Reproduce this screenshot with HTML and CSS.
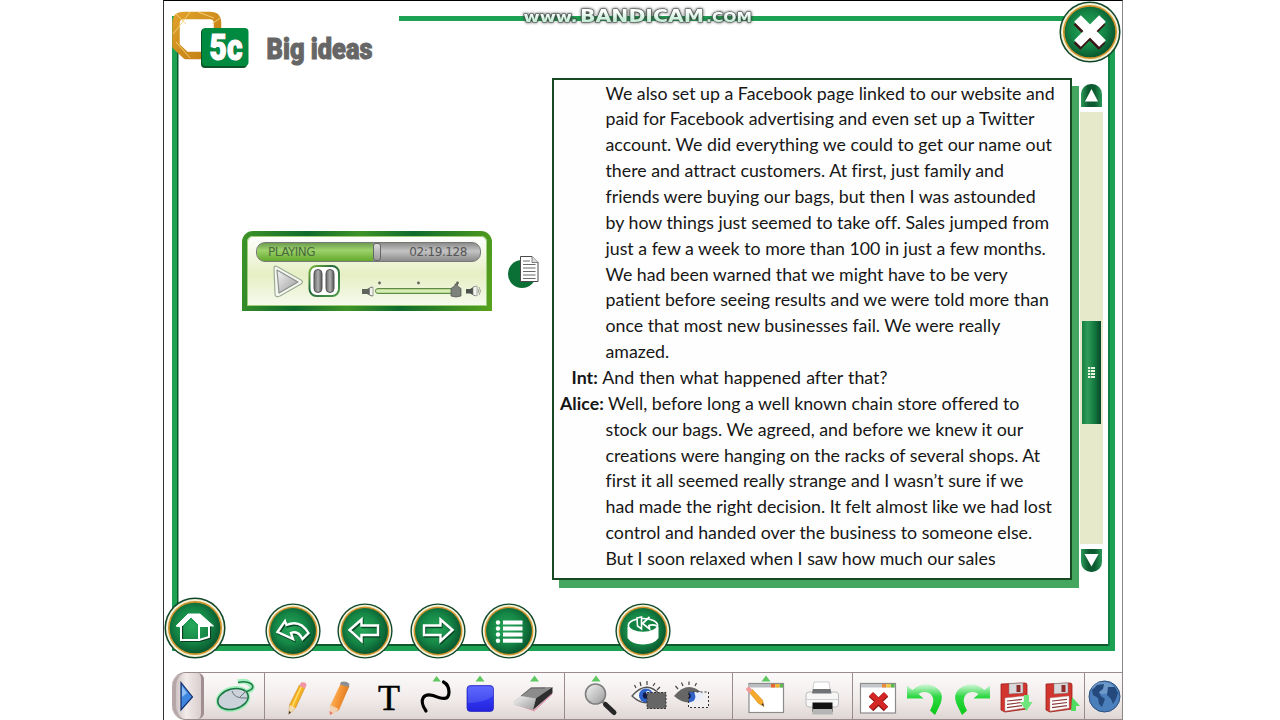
FILE: index.html
```html
<!DOCTYPE html>
<html lang="en">

<head>
    <meta charset="utf-8">
    <meta name="viewport" content="width=device-width, initial-scale=1">
    <title>5c Big ideas</title>
    <link rel="stylesheet" href="styles.css">
</head>

<body>

    <!-- shared gradients and symbols -->
    <svg class="defs" width="0" height="0">
        <defs>
            <radialGradient id="discFill" cx="45%" cy="45%" r="60%">
                <stop offset="0" stop-color="#27a85a"></stop>
                <stop offset="0.55" stop-color="#158746"></stop>
                <stop offset="1" stop-color="#07502b"></stop>
            </radialGradient>
            <linearGradient id="gold" x1="0" y1="0" x2="1" y2="1">
                <stop offset="0" stop-color="#dfa02a"></stop>
                <stop offset="1" stop-color="#c07c12"></stop>
            </linearGradient>
            <linearGradient id="grey" x1="0" y1="0" x2="1" y2="1">
                <stop offset="0" stop-color="#f4f4f4"></stop>
                <stop offset="1" stop-color="#9a9a9a"></stop>
            </linearGradient>
            <linearGradient id="dark" x1="0" y1="0" x2="1" y2="0">
                <stop offset="0" stop-color="#666"></stop>
                <stop offset="0.5" stop-color="#b0b0b0"></stop>
                <stop offset="1" stop-color="#555"></stop>
            </linearGradient>
            <linearGradient id="ring" x1="0" y1="0" x2="1" y2="1">
                <stop offset="0" stop-color="#7fb83c"></stop>
                <stop offset="0.4" stop-color="#23683a"></stop>
                <stop offset="1" stop-color="#4f9c4a"></stop>
            </linearGradient>
            <linearGradient id="blue" x1="0" y1="0" x2="0" y2="1">
                <stop offset="0" stop-color="#4a54ff"></stop>
                <stop offset="0.5" stop-color="#2f38f0"></stop>
                <stop offset="1" stop-color="#2424dc"></stop>
            </linearGradient>
            <linearGradient id="arrowGreen" x1="0" y1="0" x2="0" y2="1">
                <stop offset="0" stop-color="#d4f7da"></stop>
                <stop offset="0.4" stop-color="#2fd845"></stop>
                <stop offset="1" stop-color="#06c814"></stop>
            </linearGradient>
            <linearGradient id="orange" x1="0" y1="0" x2="1" y2="0.4">
                <stop offset="0" stop-color="#ffc47a"></stop>
                <stop offset="0.5" stop-color="#f79a3b"></stop>
                <stop offset="1" stop-color="#d9731a"></stop>
            </linearGradient>
            <linearGradient id="mint" x1="0" y1="0" x2="0" y2="1">
                <stop offset="0.3" stop-color="#ffffff"></stop>
                <stop offset="0.7" stop-color="#c9efd9"></stop>
            </linearGradient>
            <symbol id="disc" viewBox="0 0 56 56">
                <circle cx="28" cy="28" r="27.6" fill="#10472c"></circle>
                <circle cx="28" cy="28" r="26.2" fill="#f4f3d8"></circle>
                <circle cx="28" cy="28" r="24.4" fill="#d0922a"></circle>
                <circle cx="28" cy="28" r="22.9" fill="url(#discFill)"></circle>
            </symbol>
            <symbol id="floppy" viewBox="0 0 30 32">
                <path d="M2 2 L26 1 Q28 1 28 3 L28 27 L6 30 L2 28 Z" fill="#d2352d" stroke="#9c1f1b" stroke-width="0.8"></path>
                <path d="M10 1.6 L24 1 V11 L10 12 Z" fill="#d9d9dc" stroke="#777" stroke-width="0.5"></path>
                <rect x="17.5" y="3" width="4" height="7" fill="#8f2b2b"></rect>
                <path d="M6 16 L25 14 V26 L6 29 Z" fill="#fff" stroke="#b5a0a0" stroke-width="0.5"></path>
                <path d="M8 19 L23 17.4 M8 22.3 L23 20.5 M8 25.6 L23 23.6" stroke="#8c3a3a" stroke-width="1.2"></path>
            </symbol>
        </defs>
    </svg>

    <div class="stage">
        <div class="frame">
            <header>
                <svg class="badge" width="77" height="60" viewBox="172 10 77 60">
                    <path d="M184 15.500 H210 Q217.500 15.500 217.500 23 V48 Q217.500 55.500 210 55.500 H186 L176 46 V23 Q176 15.500 184 15.500 Z" fill="none" stroke="url(#gold)" stroke-width="7.500" stroke-linejoin="round"></path>
                    <path d="M176 14 L186 24 M173 34 L181 24 L190 12 M198 12 L214 18 M176 42 L190 58 M212 24 L220 18" fill="none" stroke="#f4d27a" stroke-width="0.900"></path>
                    <rect x="201" y="28.500" width="46" height="39.500" rx="4" fill="#0a5428"></rect>
                    <rect x="202" y="28" width="46.500" height="38" rx="4" fill="#008a40"></rect>
                    <text x="210" y="60" class="badge-text" textLength="33" lengthAdjust="spacingAndGlyphs" fill="#07522a" stroke="#07522a">5c</text>
                    <text x="209.500" y="59.500" class="badge-text" textLength="33" lengthAdjust="spacingAndGlyphs" fill="#fff" stroke="#fff">5c</text>
                </svg>
                <svg class="title" width="120" height="48" viewBox="262 26 120 48">
                    <text x="266.500" y="59.300" class="title-text" textLength="106" lengthAdjust="spacingAndGlyphs">Big ideas</text>
                </svg>
                <div class="rule"></div>
            </header>

            <main>
                <div class="player">
                    <div class="progress">
                        <div class="played">PLAYING</div>
                        <div class="knob"></div>
                        <div class="time">02:19.128</div>
                    </div>
                    <svg class="controls" width="240" height="43" viewBox="247 263 240 43">
                        <path d="M274 268 Q274 265.500 277 266.500 L301 280 Q304 282 301 284 L280 296 Q275 298 275 294 Z" fill="#f6f8ef" stroke="#9cab98" stroke-width="1.200"></path>
                        <path d="M277 270 L298 282 L279 293 Z" fill="url(#grey)" stroke="#8c918c" stroke-width="1.200" stroke-linejoin="round"></path>
                        <rect x="309.500" y="266" width="29.500" height="30" rx="7" fill="#fff" stroke="url(#ring)" stroke-width="2"></rect>
                        <rect x="314" y="269.500" width="8" height="23" rx="4" fill="url(#dark)" stroke="#555"></rect>
                        <rect x="326" y="269.500" width="8" height="23" rx="4" fill="url(#dark)" stroke="#555"></rect>
                        <g fill="#5f665c">
                            <circle cx="379.500" cy="283" r="1.400"></circle>
                            <circle cx="418.500" cy="283" r="1.400"></circle>
                            <circle cx="457.500" cy="283" r="1.400"></circle>
                        </g>
                        <rect x="375.500" y="288.500" width="82" height="5" rx="2.500" fill="#b8dc8c" stroke="#5f8a4c"></rect>
                        <path d="M376 291 H456" stroke="#f4fae8"></path>
                        <path d="M362 289 H367 L372 286.500 V296.500 L367 294 H362 Z" fill="#5d645c"></path>
                        <path d="M369.500 288 L373 287 V296 L369.500 295 Z" fill="#f5f5f0" stroke="#666" stroke-width="0.600"></path>
                        <path d="M451 296 V288.500 L455 285.500 V284 H457.500 V286 L461 288.500 V296 Q456 298 451 296 Z" fill="#7d837c" stroke="#4d524c" stroke-width="0.700"></path>
                        <path d="M466 289 H470 L475 286 V296 L470 293.500 H466 Z" fill="#4d524c"></path>
                        <path d="M473 287 L477 286 V296 L473 295 Z" fill="#f5f5f0" stroke="#777" stroke-width="0.600"></path>
                        <path d="M479 287 Q482 291 479 295 M478 289 Q479.500 291 478 293" fill="none" stroke="#9da39b"></path>
                    </svg>
                </div>

                <svg class="doc" width="31" height="35" viewBox="508 255 31 35">
                    <circle cx="522" cy="274" r="14" fill="#0b7036"></circle>
                    <path d="M520.500 256.500 H532 L538 262.500 V281.500 H520.500 Z" fill="#fff" stroke="#4a4a4a"></path>
                    <path d="M532 256.500 V262.500 H538" fill="#ddd" stroke="#666" stroke-width="0.800"></path>
                    <path d="M523 261 H530 M523 264.500 H535.500 M523 268 H535.500 M523 271.500 H535.500 M523 275 H535.500 M523 278.500 H535.500" stroke="#6a6a6a" stroke-width="1.100"></path>
                </svg>

                <div class="transcript">
                    <p>We also set up a Facebook page linked to our website and</p>
                    <p>paid for Facebook advertising and even set up a Twitter</p>
                    <p>account. We did everything we could to get our name out</p>
                    <p>there and attract customers. At first, just family and</p>
                    <p>friends were buying our bags, but then I was astounded</p>
                    <p>by how things just seemed to take off. Sales jumped from</p>
                    <p>just a few a week to more than 100 in just a few months.</p>
                    <p>We had been warned that we might have to be very</p>
                    <p>patient before seeing results and we were told more than</p>
                    <p>once that most new businesses fail. We were really</p>
                    <p>amazed.</p>
                    <p class="int"><b>Int:</b> And then what happened after that?</p>
                    <p class="alice"><b>Alice:</b> Well, before long a well known chain store offered to</p>
                    <p>stock our bags. We agreed, and before we knew it our</p>
                    <p>creations were hanging on the racks of several shops. At</p>
                    <p>first it all seemed really strange and I wasn’t sure if we</p>
                    <p>had made the right decision. It felt almost like we had lost</p>
                    <p>control and handed over the business to someone else.</p>
                    <p>But I soon relaxed when I saw how much our sales</p>
                </div>

                <div class="scrollbar">
                    <div class="arrow up"><svg width="21" height="23" viewBox="0 0 21 23"><path d="M10.500 5 L17 17.500 H4 Z" fill="#fff"></path></svg></div>
                    <div class="track">
                        <div class="thumb"><span></span><span></span><span></span><span></span></div>
                    </div>
                    <div class="arrow down"><svg width="21" height="23" viewBox="0 0 21 23"><path d="M3.500 5 H17.500 L10.500 17.500 Z" fill="#fff"></path></svg></div>
                </div>
            </main>
        </div>

        <nav>
            <svg class="home" width="62" height="62" viewBox="0 0 62 62">
                <use href="#disc" width="62" height="62"></use>
                <g fill="none" stroke="#0a3d20" stroke-width="2.200" transform="translate(1 1)">
                    <path d="M17 28 V43 H35 L45 40 V29"></path>
                </g>
                <path d="M12 29 L24 17 H36 L49.500 29 L37 28 V30 L27 20 L17 30 Z" fill="#fff" stroke="#fff" stroke-linejoin="round"></path>
                <path d="M17 28 V43 H35 V28 M35 43 L45 40 V29 H35" fill="none" stroke="#fff" stroke-width="2"></path>
            </svg>
            <svg class="back" width="56" height="56" viewBox="0 0 56 56">
                <use href="#disc" width="56" height="56"></use>
                <path class="shade" d="M12.500 29 L20 18 L21.500 22 Q35 16 43.500 30 L37.500 36 Q33 27 26 30 L28 36 Z"></path>
                <path class="line" d="M12.500 29 L20 18 L21.500 22 Q35 16 43.500 30 L37.500 36 Q33 27 26 30 L28 36 Z"></path>
            </svg>
            <svg class="prev" width="56" height="56" viewBox="0 0 56 56">
                <use href="#disc" width="56" height="56"></use>
                <path class="shade" d="M12.500 27 L24.500 16.500 V22.500 H41 V32 H24.500 V38 Z"></path>
                <path class="line" d="M12.500 27 L24.500 16.500 V22.500 H41 V32 H24.500 V38 Z"></path>
            </svg>
            <svg class="next" width="56" height="56" viewBox="0 0 56 56">
                <use href="#disc" width="56" height="56"></use>
                <path class="shade" d="M42.500 27 L30.500 16.500 V22.500 H14 V32 H30.500 V38 Z"></path>
                <path class="line" d="M42.500 27 L30.500 16.500 V22.500 H14 V32 H30.500 V38 Z"></path>
            </svg>
            <svg class="list" width="56" height="56" viewBox="0 0 56 56">
                <use href="#disc" width="56" height="56"></use>
                <g fill="#fff">
                    <circle cx="17" cy="19.500" r="2.200"></circle>
                    <circle cx="17" cy="25.500" r="2.200"></circle>
                    <circle cx="17" cy="31.500" r="2.200"></circle>
                    <circle cx="17" cy="37.700" r="2.200"></circle>
                    <rect x="22" y="17.500" width="19.500" height="4"></rect>
                    <rect x="22" y="23.500" width="19.500" height="4"></rect>
                    <rect x="22" y="29.500" width="19.500" height="4"></rect>
                    <rect x="22" y="35.700" width="19.500" height="4"></rect>
                </g>
            </svg>
            <svg class="drum" width="56" height="56" viewBox="0 0 56 56">
                <use href="#disc" width="56" height="56"></use>
                <path d="M12.500 24 V35 Q17 41.500 28 41.500 Q39 41.500 43.500 35 V24 Z" fill="#fff"></path>
                <ellipse cx="28" cy="22.500" rx="14.600" ry="7" fill="#128343" stroke="#fff" stroke-width="1.600"></ellipse>
                <path d="M22 15 L26.500 14 V26 L22.500 23 Z" fill="#128343" stroke="#fff" stroke-width="1.600"></path>
                <path d="M34.500 14 L27.500 20.500 L34.500 26 L34 22.500 Q38 21 42 23" fill="none" stroke="#fff" stroke-width="1.800"></path>
            </svg>
        </nav>

        <div class="toolbar">
            <div class="handle">
                <svg width="32" height="46" viewBox="172 673 32 46">
                    <path d="M181 682.500 L192.500 697 L181 710 Z" fill="#3f86e0" stroke="#12306e" stroke-width="1.200"></path>
                    <path d="M182 686 L187 693 L182 697 Z" fill="#8fbdf5"></path>
                </svg>
            </div>
            <div class="group">
                <svg width="60" height="46" viewBox="204 673 60 46">
                    <g fill="none" stroke="#7df0a4" stroke-width="5" opacity="0.700">
                        <path d="M238 682 Q246 680 250 684 Q256 689 246 692"></path>
                        <ellipse cx="233" cy="699" rx="15" ry="10" transform="rotate(-15 233 699)"></ellipse>
                    </g>
                    <path d="M238 682.500 Q246 680.500 251.500 684 Q256 689 245 692" fill="none" stroke="#237a4a" stroke-width="1.500"></path>
                    <ellipse cx="233" cy="699" rx="15.500" ry="10" transform="rotate(-15 233 699)" fill="#ccd2da" stroke="#1c7444" stroke-width="1.600"></ellipse>
                    <path d="M232 691 Q234 699 247 698 M240 697 L246 691" fill="none" stroke="#667684"></path>
                </svg>
            </div>
            <div class="group">
                <svg width="53" height="46" viewBox="265 673 53 46">
                    <path d="M299.500 685 L305 687.500 L295.500 708 L289 714 L289.500 705 Z" fill="#f5b222" stroke="#c98518" stroke-width="0.600"></path>
                    <path d="M301.500 686 L292 707" stroke="#ffdf70" stroke-width="1.500"></path>
                    <path d="M301 682.500 Q306 681.500 306.500 685 L305 688.500 L299.500 686 Z" fill="#ee96a4"></path>
                    <path d="M289.500 705 L295.500 708 L289 714 Z" fill="#f2dcb4"></path>
                    <path d="M289.200 711 L291 712.200 L288.500 714.500 Z" fill="#333"></path>
                </svg>
                <svg width="42" height="46" viewBox="318 673 42 46">
                    <path d="M341 683 L349.500 686 L339 710 L331 714.500 L330 706 Z" fill="url(#orange)"></path>
                    <path d="M341 682 Q346 680.500 349.500 684 L348.500 687 L340 684.500 Z" fill="#8c8f96"></path>
                    <path d="M330.500 705 L338.500 709 L333 714.500 L329.500 714 Z" fill="#f1d3b4"></path>
                    <path d="M329.500 711 L333 713 L330 715 Z" fill="#e77b6a"></path>
                </svg>
                <svg width="50" height="46" viewBox="360 673 50 46">
                    <text x="389" y="709.800" text-anchor="middle" class="letter">T</text>
                </svg>
                <svg width="48" height="46" viewBox="410 673 48 46">
                    <path d="M432.500 681.500 L436.500 676 L441 681.500 Z" fill="#5fc860"></path>
                    <path d="M426 711 C418 699 424 693 433 695.500 C442 699 449 701 449 692 Q449 685 443.500 682" fill="none" stroke="#000" stroke-width="3.200" stroke-linecap="round"></path>
                </svg>
                <svg width="48" height="46" viewBox="458 673 48 46">
                    <path d="M475.500 681.500 L480 675.500 L484.500 681.500 Z" fill="#5fc860"></path>
                    <rect x="467" y="685.500" width="26.500" height="26" rx="3.500" fill="url(#blue)" stroke="#2020b8" stroke-width="0.700"></rect>
                    <path d="M468 703 Q484 703 493 696 V689 Q493 686.500 490 686.500 H471 Q468 686.500 468 689 Z" fill="#fff" opacity="0.130"></path>
                </svg>
                <svg width="58" height="46" viewBox="506 673 58 46">
                    <path d="M530 681.500 L534.500 675.500 L539 681.500 Z" fill="#5fc860"></path>
                    <path d="M514 703.500 L534 710.800 L552 694" fill="none" stroke="#e79ab4" stroke-width="1.200"></path>
                    <path d="M514 702 L531 687.500 L552 687 L537 699 Z" fill="#8c8c8c"></path>
                    <path d="M514 702 L521 696 L536 698.500 L533 710 L514 705 Z" fill="url(#grey)"></path>
                    <path d="M536 698.500 L552.500 687 V693 L533 710 Z" fill="#2e2e2e"></path>
                    <path d="M521 696 L531 688 L545 688" fill="none" stroke="#555" stroke-width="0.800"></path>
                </svg>
            </div>
            <div class="group gap">
                <svg width="58" height="46" viewBox="566 673 58 46">
                    <path d="M591.500 681.500 L596 675.500 L600.500 681.500 Z" fill="#5fc860"></path>
                    <path d="M602 701 L606 705" stroke="#888" stroke-width="3"></path>
                    <path d="M605.500 704.500 L614 712.500" stroke="#262626" stroke-width="5" stroke-linecap="round"></path>
                    <circle cx="595.500" cy="694" r="10" fill="url(#grey)" stroke="#808080" stroke-width="1.600"></circle>
                </svg>
                <svg width="48" height="46" viewBox="624 673 48 46">
                    <path d="M636 688 L634.500 685 M641 686 L640 682 M647 685 V681 M653 686 L655 683 M657 690 L660 687" stroke="#444" stroke-width="1.200"></path>
                    <path d="M632 696 Q647 679 660 695 Q647 710 632 696 Z" fill="#f5f5f7" stroke="#555" stroke-width="1.300"></path>
                    <circle cx="646" cy="695.500" r="7" fill="#2f62c8"></circle>
                    <circle cx="646" cy="695.500" r="3.200" fill="#101a48"></circle>
                    <circle cx="648" cy="692.500" r="1.800" fill="#dfe9ff"></circle>
                    <rect x="647" y="692.500" width="19" height="16" fill="#666" stroke="#333" stroke-dasharray="2 1.500"></rect>
                </svg>
                <svg width="60" height="46" viewBox="672 673 60 46">
                    <path d="M678 689 L675.500 686 M683 686 L681.500 682.500 M689 685 V681.500 M695 686 L696.500 683" stroke="#444" stroke-width="1.200"></path>
                    <rect x="688.500" y="692" width="20" height="15.500" fill="#f2f0f0"></rect>
                    <path d="M674 696 Q688 679 703 694 Q690 710 674 696 Z" fill="#666"></path>
                    <path d="M689 692 H702 L703.500 695 Q697 703 689 703 Z" fill="#e9eefc"></path>
                    <path d="M689 692 H694 Q697 697 693.500 701 L689 702.500 Z" fill="#2f62c8"></path>
                    <path d="M689 693 Q693 696 689 699 Z" fill="#101a48"></path>
                    <rect x="688.500" y="692" width="20" height="15.500" fill="none" stroke="#333" stroke-dasharray="2 2"></rect>
                </svg>
            </div>
            <div class="group gap">
                <svg width="58" height="46" viewBox="734 673 58 46">
                    <rect x="749" y="683.500" width="34.500" height="29" fill="#fff" stroke="#8c8c8c" stroke-width="1.200"></rect>
                    <rect x="749.500" y="684" width="33.500" height="3.500" fill="#b9bcc0"></rect>
                    <rect x="771" y="684" width="4" height="3.500" fill="#e8672a"></rect>
                    <rect x="775.500" y="684" width="4" height="3.500" fill="#f2b52e"></rect>
                    <rect x="780" y="684" width="3" height="3.500" fill="#5cb84a"></rect>
                    <path d="M761.500 681.500 L766 675.500 L770.500 681.500 Z" fill="#5fc860"></path>
                    <path d="M749 692 L752 689 L762.500 700 L764 706.500 L758.500 703.500 Z" fill="#f7a92c" stroke="#c98518" stroke-width="0.500"></path>
                    <path d="M746 690 Q746 687 749.500 687 L752.500 690 L749.500 693 Z" fill="#f29a9a"></path>
                    <path d="M761.500 704.500 L764 706.500 L763 703 Z" fill="#333"></path>
                </svg>
                <svg width="60" height="46" viewBox="792 673 60 46">
                    <path d="M814 682 H829 L830.500 692 H812.500 Z" fill="#fff" stroke="#bbb" stroke-width="0.700"></path>
                    <rect x="806" y="692" width="32.500" height="15" rx="3" fill="#f6f6f6" stroke="#bcbcbc"></rect>
                    <path d="M813 689 H830.500 L831.500 693.500 H812 Z" fill="#6f7375"></path>
                    <path d="M807 699.500 H838" stroke="#cfcfcf"></path>
                    <rect x="812.500" y="702.500" width="20" height="9.500" fill="#111"></rect>
                    <path d="M813 709 H832 L833 714.500 H812 Z" fill="#b5b5b5"></path>
                </svg>
            </div>
            <div class="group gap">
                <svg width="46" height="46" viewBox="854 673 46 46">
                    <rect x="860.500" y="683.500" width="35" height="29.500" fill="#fff" stroke="#8c8c8c" stroke-width="1.200"></rect>
                    <rect x="861" y="684" width="34" height="3.500" fill="#c4c8cc"></rect>
                    <rect x="882" y="684" width="4" height="3.500" fill="#e88a3a"></rect>
                    <rect x="886.500" y="684" width="4" height="3.500" fill="#f2c83e"></rect>
                    <rect x="891" y="684" width="3.500" height="3.500" fill="#5cb84a"></rect>
                    <path d="M871 694.500 L886 709 M886 694.500 L871 709" stroke="#8e1414" stroke-width="6.500"></path>
                    <path d="M871 694 L886 708 M886 694 L871 708" stroke="#d52626" stroke-width="5"></path>
                </svg>
                <svg width="48" height="46" viewBox="900 673 48 46">
                    <path d="M907 685.500 L912.500 690 Q920 683 929 684.500 Q948 690 939 707 L935 715 L930 710.500 Q937 698 929 693 Q923 690.500 918.500 694 L923.500 698.500 H907 Z" fill="url(#arrowGreen)"></path>
                </svg>
                <svg width="46" height="46" viewBox="948 673 46 46">
                    <path d="M990 685.500 L984.500 690 Q977 683 968 684.500 Q949 690 958 707 L962 715 L967 710.500 Q960 698 968 693 Q974 690.500 978.500 694 L973.500 698.500 H990 Z" fill="url(#arrowGreen)"></path>
                </svg>
                <svg width="44" height="46" viewBox="994 673 44 46">
                    <use href="#floppy" x="999" y="682" width="30" height="32"></use>
                    <path d="M1024 695 H1029 V702 H1032.500 L1026.500 711 L1020 702 H1024 Z" fill="#6fe67c"></path>
                </svg>
                <svg width="46" height="46" viewBox="1038 673 46 46">
                    <use href="#floppy" x="1044" y="682" width="30" height="32"></use>
                    <path d="M1072 697 L1080 706 H1076 V711 H1071 Z" fill="#4fdc60"></path>
                </svg>
            </div>
            <div class="group gap last">
                <svg width="36" height="46" viewBox="1086 673 36 46">
                    <circle cx="1104.500" cy="696.500" r="15.500" fill="#4a7fbb" stroke="#2b4f80"></circle>
                    <ellipse cx="1103" cy="688" rx="11" ry="6" fill="#8db2da" opacity="0.500"></ellipse>
                    <path d="M1092 690 L1097 685 L1104 684 L1103 689 L1099 692 L1101 696 L1105 699 L1102 707 L1099 704 L1098 698 L1093 695 Z M1108 687 L1115 687 L1118 693 L1116 699 L1113 704 L1111 699 L1107 695 Z" fill="#24497c"></path>
                </svg>
            </div>
        </div>

        <svg class="close" width="62" height="62" viewBox="0 0 62 62">
            <use href="#disc" width="62" height="62"></use>
            <path d="M18.500 18.500 L43.500 43.500 M43.500 18.500 L18.500 43.500" stroke="#3a1414" stroke-width="9.500" transform="translate(-0.500 2)"></path>
            <path d="M18.500 17.500 L43.500 42.500 M43.500 17.500 L18.500 42.500" stroke="#fff" stroke-width="9.500"></path>
        </svg>
    </div>

    <!-- recorder watermark -->
    <svg class="watermark" width="244" height="30" viewBox="516 0 244 30">
        <g class="halo">
            <text x="523.500" y="21.500" class="small" textLength="54" lengthAdjust="spacingAndGlyphs">www.</text>
            <text x="580" y="21.500" class="big" textLength="124" lengthAdjust="spacingAndGlyphs">BANDICAM</text>
            <text x="706" y="21.500" class="small" textLength="46" lengthAdjust="spacingAndGlyphs">.COM</text>
        </g>
    </svg>

</body>

</html>
```
FILE: styles.css
```css
* {
    box-sizing: border-box;
}

body {
    margin: 0;
    width: 1280px;
    height: 720px;
    overflow: hidden;
    background-color: #ffffff;
    font-family: Lato, Carlito, sans-serif;
}

svg {
    display: block;
    flex: none;
    overflow: visible;
}

.defs {
    position: absolute;
}

/* The lesson window in the middle of the screen */
.stage {
    position: relative;
    width: 960px;
    height: 720px;
    margin-left: 163px;
    padding-top: 15px;
    border-top: 1px solid #000;
    border-left: 1px solid #333;
    border-right: 1px solid #888;
}

.frame {
    width: 943px;
    height: 635px;
    margin-left: 8px;
    border: 5px solid #1da152;
    border-top: none;
    box-shadow: inset 1.5px 0 0 #0c5a2c, inset -2px 0 0 #118045, inset 0 -2px 0 #0c5a2c;
}

/* Header */
header {
    display: flex;
    height: 62px;
}

.badge {
    margin: -6px 0 0 -5px;
}

.title {
    margin: 10px 0 0 13px;
}

.badge-text {
    font-family: Roboto, sans-serif;
    font-weight: 900;
    font-size: 37px;
    stroke-width: 1.2px;
}

.title-text {
    font-family: Roboto, sans-serif;
    font-weight: 900;
    font-size: 29.5px;
    fill: #666;
    stroke: #666;
    stroke-width: 1px;
}

.rule {
    flex: 1;
    height: 5px;
    margin-left: 17px;
    background-color: #1da152;
}

main {
    display: flex;
    align-items: flex-start;
}

/* Audio player */
.player {
    width: 250px;
    height: 80px;
    margin: 153px 0 0 65px;
    padding: 6px 0 0 9px;
    border: 5px solid transparent;
    border-radius: 11px 11px 0 0;
    background: linear-gradient(#ffffff, #e6efc4 55%, #f7faee) padding-box,
        linear-gradient(100deg, #3f9428, #0f6b2c 25%, #3f9428 45%, #0f6b2c 65%, #5aa31c) border-box;
    box-shadow: inset 0 0 0 1px #9fce7c;
}

.progress {
    display: flex;
    width: 225px;
    height: 20px;
    border: 1px solid #777;
    border-radius: 9px;
    background: linear-gradient(#8c8c8c, #c4c4c4 45%, #8a8a8a);
    font: 12px/18px "DejaVu Sans", sans-serif;
    color: #555;
    overflow: hidden;
}

.played {
    width: 116px;
    padding-left: 11px;
    background: linear-gradient(#6d9c50, #9ed26b 40%, #63a92c);
    color: #4a6b40;
    letter-spacing: -0.5px;
}

.knob {
    width: 8px;
    border: 1px solid #666;
    border-radius: 3px;
    background: linear-gradient(#ddd, #999);
}

.time {
    width: 86px;
    text-align: right;
    letter-spacing: -0.4px;
}

.controls {
    margin: 1px 0 0 -9px;
}

.doc {
    margin: 177px 0 0 16px;
}

/* Transcript */
.transcript {
    width: 520px;
    height: 502px;
    margin-left: 13px;
    padding: 0.5px 0 0 51.5px;
    border: 2px solid #164a22;
    background-color: #fefefe;
    box-shadow: 7px 8px 0 #45a75f;
    font-size: 17.78px;
    line-height: 25.86px;
    font-variant-ligatures: none;
    color: #161616;
}

.transcript p {
    margin: 0;
    white-space: nowrap;
}

.transcript .int {
    margin-left: -34px;
    word-spacing: 0.6px;
}

.transcript .alice {
    margin-left: -45.5px;
}

/* Scrollbar */
.scrollbar {
    display: flex;
    flex-direction: column;
    align-items: center;
    width: 23px;
    margin: 6px 0 0 8px;
}

.arrow {
    width: 21px;
    height: 23px;
    background: linear-gradient(90deg, #2b9a59, #0c5a30 35%, #0c5a30 65%, #2b9a59);
}

.up {
    border-radius: 10px 10px 0 0;
}

.down {
    border-radius: 0 0 10px 10px;
}

.track {
    width: 23px;
    height: 432px;
    margin: 5px 0;
    padding: 209px 2px 0;
    background-color: #e6eacb;
}

.thumb {
    display: flex;
    flex-direction: column;
    justify-content: center;
    align-items: center;
    gap: 1px;
    height: 103px;
    background: linear-gradient(90deg, #15803f, #2f9a5a 30%, #137a3e 65%, #07472a);
}

.thumb span {
    width: 7px;
    height: 2px;
    background: repeating-linear-gradient(90deg, #e6f3e2 0 2px, #5aa874 2px 2.5px);
}

/* Round navigation buttons */
nav {
    display: flex;
    align-items: flex-end;
    height: 62px;
    margin-top: -54px;
}

.back {
    margin-left: 39px;
}

.prev {
    margin-left: 16px;
}

.next {
    margin-left: 17px;
}

.list {
    margin-left: 15px;
}

.drum {
    margin-left: 78px;
}

.line {
    fill: none;
    stroke: #fff;
    stroke-width: 2.4;
}

.shade {
    fill: none;
    stroke: #0a4a26;
    stroke-width: 2.4;
    transform: translate(1px, 1.5px);
}

/* Drawing toolbar */
.toolbar {
    display: flex;
    height: 48px;
    margin: 13px 0 0 8px;
    border: 1px solid #9a8c8e;
    border-left: none;
    border-right: none;
    border-radius: 14px 0 0 14px;
    background: linear-gradient(#fbf9f9, #f3eeed 50%, #dfd6d4);
    overflow: hidden;
}

.handle {
    width: 32px;
    border-right: 3px solid #a08e92;
    border-left: 4px solid #b7a6a8;
    border-radius: 14px 6px 6px 14px;
    background: linear-gradient(90deg, #cfc2c3, #f1ebea 40%, #d9cecd);
}

.handle svg {
    margin-left: -4px;
}

.group {
    display: flex;
    border-right: 1px solid #9a8c8e;
}

.gap {
    padding-left: 1px;
}

.last {
    border-right: none;
}

.letter {
    font-family: "Liberation Serif", serif;
    font-size: 36px;
    stroke: #000;
    stroke-width: 0.5px;
}

/* Window close button and the watermark sit on top of the page */
.close {
    position: absolute;
    top: 0;
    left: 895px;
}

.watermark {
    position: absolute;
    top: 0;
    left: 516px;
}

.halo {
    font-family: "DejaVu Sans", sans-serif;
    font-weight: bold;
    fill: url(#mint);
    stroke: #4c5a53;
    stroke-width: 1.2px;
    stroke-linejoin: round;
    paint-order: stroke;
    filter: drop-shadow(0 0 1.5px #333);
}

.small {
    font-size: 13.5px;
}

.big {
    font-size: 18px;
}
```
